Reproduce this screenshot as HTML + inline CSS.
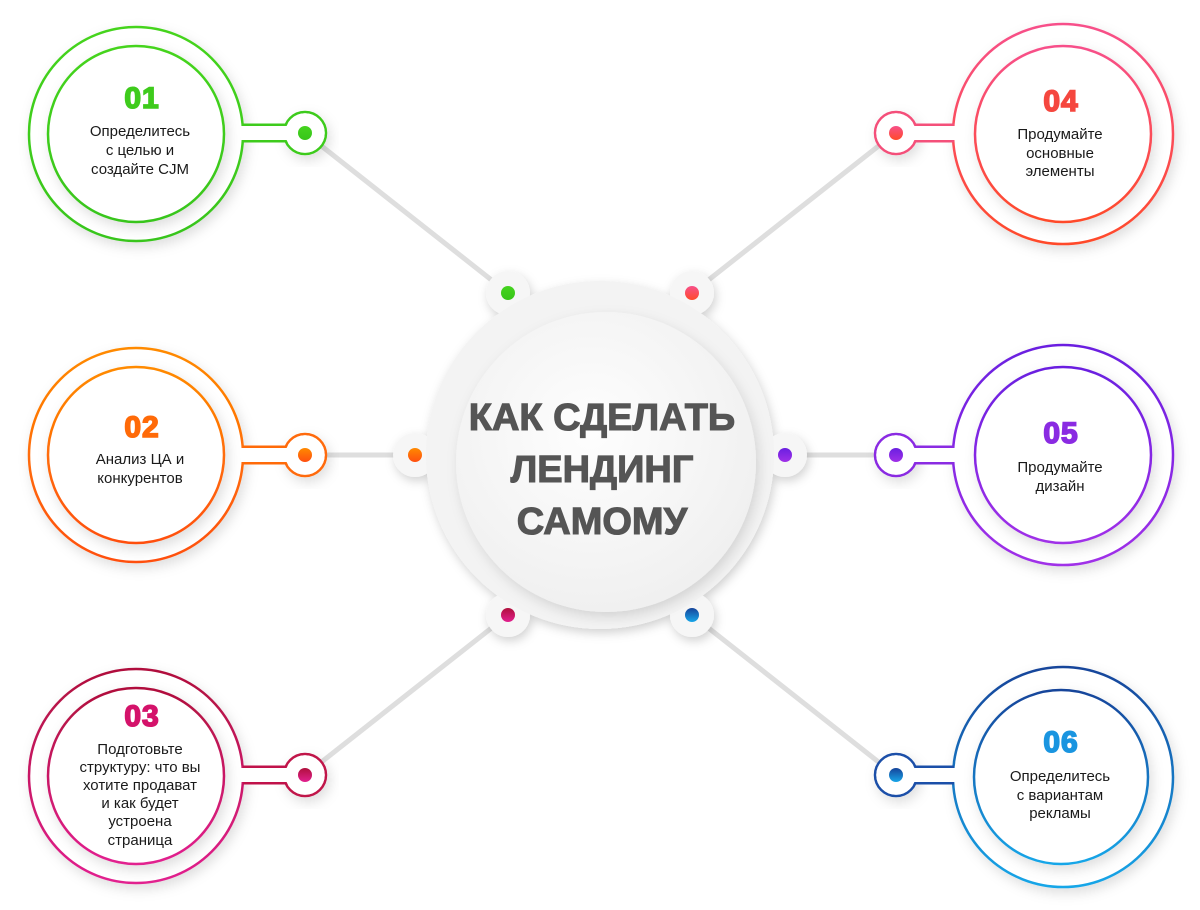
<!DOCTYPE html>
<html><head><meta charset="utf-8"><style>
html,body{margin:0;padding:0;background:#fff;}
svg{display:block}
.num{font-family:"Liberation Sans",sans-serif;font-weight:900;font-size:30px;stroke-width:1.6;letter-spacing:1px;}
.t{font-family:"Liberation Sans",sans-serif;font-size:15px;fill:#1a1a1a;}
.title{font-family:"Liberation Sans",sans-serif;font-weight:bold;font-size:38px;fill:#555;stroke:#555;stroke-width:1.1;}
</style></head><body>
<svg width="1200" height="910" viewBox="0 0 1200 910" xmlns="http://www.w3.org/2000/svg">
<defs>
<filter id="sh" x="-30%" y="-30%" width="160%" height="160%"><feDropShadow dx="3" dy="5" stdDeviation="6" flood-color="#000" flood-opacity="0.13"/></filter>
<filter id="sh2" x="-30%" y="-30%" width="160%" height="160%"><feDropShadow dx="2" dy="4" stdDeviation="5" flood-color="#000" flood-opacity="0.18"/></filter>
<linearGradient id="g1" x1="0" y1="0" x2="0" y2="1"><stop offset="0" stop-color="#45d41f"/><stop offset="1" stop-color="#38c51a"/></linearGradient>
<linearGradient id="g2" x1="0" y1="0" x2="0" y2="1"><stop offset="0" stop-color="#ff8a00"/><stop offset="1" stop-color="#ff4f10"/></linearGradient>
<linearGradient id="g3" x1="0" y1="0" x2="0" y2="1"><stop offset="0" stop-color="#b0103c"/><stop offset="1" stop-color="#e2208f"/></linearGradient>
<linearGradient id="g4" x1="0" y1="0" x2="0" y2="1"><stop offset="0" stop-color="#f7508a"/><stop offset="1" stop-color="#ff4a2a"/></linearGradient>
<linearGradient id="g5" x1="0" y1="0" x2="0" y2="1"><stop offset="0" stop-color="#6a1fe0"/><stop offset="1" stop-color="#a030e8"/></linearGradient>
<linearGradient id="g6" x1="0" y1="0" x2="0" y2="1"><stop offset="0" stop-color="#16449a"/><stop offset="1" stop-color="#18a6e8"/></linearGradient>
<radialGradient id="cg" cx="0.45" cy="0.4" r="0.6"><stop offset="0" stop-color="#fefefe"/><stop offset="1" stop-color="#f0f0f0"/></radialGradient>
</defs>

<g stroke="#dedede" stroke-width="5" stroke-linecap="round">
<line x1="305" y1="133" x2="508" y2="293"/>
<line x1="305" y1="455" x2="415" y2="455"/>
<line x1="305" y1="775" x2="508" y2="615"/>
<line x1="895" y1="133" x2="692" y2="293"/>
<line x1="895" y1="455" x2="785" y2="455"/>
<line x1="895" y1="775" x2="692" y2="615"/>
</g>

<g filter="url(#sh2)">
<circle cx="508" cy="293" r="22" fill="#f6f6f6"/>
<circle cx="692" cy="293" r="22" fill="#f6f6f6"/>
<circle cx="415" cy="455" r="22" fill="#f6f6f6"/>
<circle cx="785" cy="455" r="22" fill="#f6f6f6"/>
<circle cx="508" cy="615" r="22" fill="#f6f6f6"/>
<circle cx="692" cy="615" r="22" fill="#f6f6f6"/>
<circle cx="600" cy="455" r="174" fill="#f3f3f3"/>
</g>
<circle cx="600" cy="455" r="174" fill="#f3f3f3"/>
<circle cx="606" cy="462" r="150" fill="url(#cg)" filter="url(#sh)"/>
<circle cx="508" cy="293" r="7" fill="url(#g1)"/>
<circle cx="692" cy="293" r="7" fill="url(#g4)"/>
<circle cx="415" cy="455" r="7" fill="url(#g2)"/>
<circle cx="785" cy="455" r="7" fill="url(#g5)"/>
<circle cx="508" cy="615" r="7" fill="url(#g3)"/>
<circle cx="692" cy="615" r="7" fill="url(#g6)"/>
<text class="title" text-anchor="middle" x="602" y="430">КАК СДЕЛАТЬ</text>
<text class="title" text-anchor="middle" x="602" y="482">ЛЕНДИНГ</text>
<text class="title" text-anchor="middle" x="602" y="534">САМОМУ</text>

<g>
<circle cx="136" cy="134" r="107" fill="#fff" stroke="url(#g1)" stroke-width="2.5" filter="url(#sh)"/>
<circle cx="136" cy="134" r="88" fill="#fff" stroke="url(#g1)" stroke-width="2.5" filter="url(#sh)"/>
<circle cx="305" cy="133" r="21" fill="#fff" stroke="#3ecb1c" stroke-width="2.5" filter="url(#sh)"/>
<line x1="243" y1="133" x2="288" y2="133" stroke="#3ecb1c" stroke-width="19"/>
<line x1="241" y1="133" x2="290" y2="133" stroke="#fff" stroke-width="14"/>
<circle cx="305" cy="133" r="19.7" fill="#fff"/>
<circle cx="305" cy="133" r="7" fill="url(#g1)"/>
<text class="num" fill="#3ecb1c" stroke="#3ecb1c" text-anchor="middle" x="142" y="108">01</text>
<text class="t" text-anchor="middle" x="140" y="136">Определитесь</text>
<text class="t" text-anchor="middle" x="140" y="155">с целью и</text>
<text class="t" text-anchor="middle" x="140" y="174">создайте CJM</text>
</g>
<g>
<circle cx="136" cy="455" r="107" fill="#fff" stroke="url(#g2)" stroke-width="2.5" filter="url(#sh)"/>
<circle cx="136" cy="455" r="88" fill="#fff" stroke="url(#g2)" stroke-width="2.5" filter="url(#sh)"/>
<circle cx="305" cy="455" r="21" fill="#fff" stroke="#ff6a08" stroke-width="2.5" filter="url(#sh)"/>
<line x1="243" y1="455" x2="288" y2="455" stroke="#ff6a08" stroke-width="19"/>
<line x1="241" y1="455" x2="290" y2="455" stroke="#fff" stroke-width="14"/>
<circle cx="305" cy="455" r="19.7" fill="#fff"/>
<circle cx="305" cy="455" r="7" fill="url(#g2)"/>
<text class="num" fill="#ff6a08" stroke="#ff6a08" text-anchor="middle" x="142" y="437">02</text>
<text class="t" text-anchor="middle" x="140" y="464">Анализ ЦА и</text>
<text class="t" text-anchor="middle" x="140" y="483">конкурентов</text>
</g>
<g>
<circle cx="136" cy="776" r="107" fill="#fff" stroke="url(#g3)" stroke-width="2.5" filter="url(#sh)"/>
<circle cx="136" cy="776" r="88" fill="#fff" stroke="url(#g3)" stroke-width="2.5" filter="url(#sh)"/>
<circle cx="305" cy="775" r="21" fill="#fff" stroke="#c0124a" stroke-width="2.5" filter="url(#sh)"/>
<line x1="243" y1="775" x2="288" y2="775" stroke="#c0124a" stroke-width="19"/>
<line x1="241" y1="775" x2="290" y2="775" stroke="#fff" stroke-width="14"/>
<circle cx="305" cy="775" r="19.7" fill="#fff"/>
<circle cx="305" cy="775" r="7" fill="url(#g3)"/>
<text class="num" fill="#d4136a" stroke="#d4136a" text-anchor="middle" x="142" y="726">03</text>
<text class="t" text-anchor="middle" x="140" y="754">Подготовьте</text>
<text class="t" text-anchor="middle" x="140" y="772">структуру: что вы</text>
<text class="t" text-anchor="middle" x="140" y="790">хотите продават</text>
<text class="t" text-anchor="middle" x="140" y="808">и как будет</text>
<text class="t" text-anchor="middle" x="140" y="826">устроена</text>
<text class="t" text-anchor="middle" x="140" y="845">страница</text>
</g>

<g>
<circle cx="1063" cy="134" r="110" fill="#fff" stroke="url(#g4)" stroke-width="2.5" filter="url(#sh)"/>
<circle cx="1063" cy="134" r="88" fill="#fff" stroke="url(#g4)" stroke-width="2.5" filter="url(#sh)"/>
<circle cx="896" cy="133" r="21" fill="#fff" stroke="#f4507a" stroke-width="2.5" filter="url(#sh)"/>
<line x1="912" y1="133" x2="954" y2="133" stroke="#f4507a" stroke-width="19"/>
<line x1="910" y1="133" x2="956" y2="133" stroke="#fff" stroke-width="14"/>
<circle cx="896" cy="133" r="19.7" fill="#fff"/>
<circle cx="896" cy="133" r="7" fill="url(#g4)"/>
<text class="num" fill="#f5473f" stroke="#f5473f" text-anchor="middle" x="1061" y="111">04</text>
<text class="t" text-anchor="middle" x="1060" y="139">Продумайте</text>
<text class="t" text-anchor="middle" x="1060" y="158">основные</text>
<text class="t" text-anchor="middle" x="1060" y="176">элементы</text>
</g>
<g>
<circle cx="1063" cy="455" r="110" fill="#fff" stroke="url(#g5)" stroke-width="2.5" filter="url(#sh)"/>
<circle cx="1063" cy="455" r="88" fill="#fff" stroke="url(#g5)" stroke-width="2.5" filter="url(#sh)"/>
<circle cx="896" cy="455" r="21" fill="#fff" stroke="#8a2be2" stroke-width="2.5" filter="url(#sh)"/>
<line x1="912" y1="455" x2="954" y2="455" stroke="#8a2be2" stroke-width="19"/>
<line x1="910" y1="455" x2="956" y2="455" stroke="#fff" stroke-width="14"/>
<circle cx="896" cy="455" r="19.7" fill="#fff"/>
<circle cx="896" cy="455" r="7" fill="url(#g5)"/>
<text class="num" fill="#8a2be2" stroke="#8a2be2" text-anchor="middle" x="1061" y="443">05</text>
<text class="t" text-anchor="middle" x="1060" y="472">Продумайте</text>
<text class="t" text-anchor="middle" x="1060" y="491">дизайн</text>
</g>
<g>
<circle cx="1063" cy="777" r="110" fill="#fff" stroke="url(#g6)" stroke-width="2.5" filter="url(#sh)"/>
<circle cx="1061" cy="777" r="87" fill="#fff" stroke="url(#g6)" stroke-width="2.5" filter="url(#sh)"/>
<circle cx="896" cy="775" r="21" fill="#fff" stroke="#1b4fa8" stroke-width="2.5" filter="url(#sh)"/>
<line x1="912" y1="775" x2="954" y2="775" stroke="#1b4fa8" stroke-width="19"/>
<line x1="910" y1="775" x2="956" y2="775" stroke="#fff" stroke-width="14"/>
<circle cx="896" cy="775" r="19.7" fill="#fff"/>
<circle cx="896" cy="775" r="7" fill="url(#g6)"/>
<text class="num" fill="#1a95e0" stroke="#1a95e0" text-anchor="middle" x="1061" y="752">06</text>
<text class="t" text-anchor="middle" x="1060" y="781">Определитесь</text>
<text class="t" text-anchor="middle" x="1060" y="800">с вариантам</text>
<text class="t" text-anchor="middle" x="1060" y="818">рекламы</text>
</g>
</svg>
</body></html>
